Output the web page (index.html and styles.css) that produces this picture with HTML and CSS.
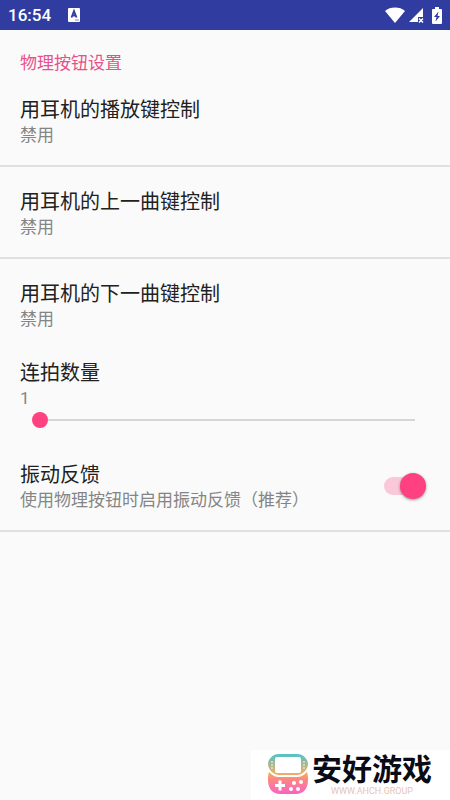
FILE: index.html
```html
<!DOCTYPE html>
<html lang="zh-CN">
<head>
<meta charset="utf-8">
<meta name="viewport" content="width=device-width, initial-scale=1">
<title>物理按钮设置</title>
<link rel="stylesheet" href="styles.css">
</head>
<body>
<header class="status">
  <span class="clock">16:54</span>
  <svg class="app-icon" width="12" height="14" viewBox="0 0 12 14" aria-hidden="true">
    <path fill="#fff" d="M1 0h10a1 1 0 0 1 1 1v12a1 1 0 0 1-1 1H1a1 1 0 0 1-1-1V1a1 1 0 0 1 1-1z"/>
    <path fill="none" stroke="#303c9f" stroke-width="1.8" d="M3.500 9.500 6 3l2.500 6.500M4.500 7.500h3"/>
    <path stroke="#303c9f" stroke-width=".6" d="M7 12h4"/>
  </svg>
  <span class="system">
    <svg width="20" height="16" viewBox="0 0 20 16" aria-hidden="true">
      <path fill="#fff" d="M0 4C5-.6 15-.6 20 4l-10 12z"/>
    </svg>
    <svg width="15" height="15" viewBox="0 0 15 15" aria-hidden="true">
      <path fill="#fff" d="M14 0v9H9v5H0z"/>
      <path fill="none" stroke="#fff" stroke-width="1.500" d="m10 10.500 4 4m0-4-4 4"/>
    </svg>
    <svg width="10" height="17" viewBox="0 0 10 17" aria-hidden="true">
      <path fill="#fff" d="M3 0h4v2h2a1 1 0 0 1 1 1v13a1 1 0 0 1-1 1H1a1 1 0 0 1-1-1V3a1 1 0 0 1 1-1h2z"/>
      <path fill="#303c9f" d="M6.500 4.500 2 10h2.500L3.500 14.500 8 9H5.500z"/>
    </svg>
  </span>
</header>
<main class="settings">
  <h1 class="category">物理按钮设置</h1>
  <button class="row divided" type="button">
    <span class="title">用耳机的播放键控制</span>
    <span class="summary">禁用</span>
  </button>
  <button class="row divided" type="button">
    <span class="title">用耳机的上一曲键控制</span>
    <span class="summary">禁用</span>
  </button>
  <button class="row" type="button">
    <span class="title">用耳机的下一曲键控制</span>
    <span class="summary">禁用</span>
  </button>
  <div class="row">
    <label class="title" for="burst">连拍数量</label>
    <output class="summary" for="burst">1</output>
    <input class="slider" id="burst" type="range" min="1" max="20" value="1">
  </div>
  <div class="row divided with-switch">
    <label class="texts" for="vibrate">
      <span class="title">振动反馈</span>
      <span class="summary">使用物理按钮时启用振动反馈（推荐）</span>
    </label>
    <input class="switch" id="vibrate" type="checkbox" checked>
  </div>
</main>
<footer class="brand">
  <svg class="logo" width="40" height="40" viewBox="0 0 40 40" aria-hidden="true">
    <defs>
      <linearGradient id="shell" x1="0" y1="0" x2="0" y2="40" gradientUnits="userSpaceOnUse">
        <stop offset="0" stop-color="#4fc3c9"/>
        <stop offset=".48" stop-color="#f0b060"/>
        <stop offset=".62" stop-color="#fb8a80"/>
        <stop offset="1" stop-color="#fb62c4"/>
      </linearGradient>
    </defs>
    <path fill="url(#shell)" fill-rule="evenodd" d="M11 0h18c6 0 11 5 11 10s-5 11-11 11H11C5 21 0 15 0 10S5 0 11 0zM9 3a2 2 0 0 0-2 2v12a2 2 0 0 0 2 2h22a2 2 0 0 0 2-2V5a2 2 0 0 0-2-2z"/>
    <path fill="url(#shell)" d="M1 18c3 3 6 5 10 5h18c4 0 7-2 10-5 1 2 1 5 1 8 0 9-5 14-12 14H12C5 40 0 35 0 26c0-3 0-6 1-8z"/>
    <path stroke="#fff" stroke-width="3" d="M7 31.500h10M12 26.500v10"/>
    <g fill="#fff">
      <circle cx="26" cy="29" r="2"/><circle cx="33" cy="28" r="2"/>
      <circle cx="23" cy="35" r="2"/><circle cx="30" cy="35" r="2"/>
      <circle cx="4" cy="8" r=".8"/><circle cx="4" cy="11" r=".8"/><circle cx="4" cy="14" r=".8"/>
      <circle cx="36" cy="8" r=".8"/><circle cx="36" cy="11" r=".8"/><circle cx="36" cy="14" r=".8"/>
    </g>
  </svg>
  <div class="brand-text">
    <strong class="brand-name">安好游戏</strong>
    <small class="brand-url">WWW.AHCH.GROUP</small>
  </div>
</footer>
</body>
</html>
```
FILE: styles.css
```css
* {
  box-sizing: border-box;
}

body {
  display: flex;
  flex-direction: column;
  min-height: 100vh;
  margin: 0;
  background: #fafafa;
  color: #212121;
  font-family: Roboto, "Noto Sans CJK SC", sans-serif;
}

.status {
  display: flex;
  align-items: center;
  gap: 17px;
  height: 30px;
  padding: 0 8px;
  background: #303c9f;
  color: #fff;
}

.clock {
  font-size: 17px;
  font-weight: 500;
  line-height: 30px;
}

.system {
  display: flex;
  align-items: center;
  gap: 4px;
  margin-left: auto;
}

.system svg:last-child {
  margin-left: 4px;
}

.category {
  margin: 0;
  padding: 21px 20px 0;
  color: #e8508a;
  font-size: 17px;
  font-weight: 400;
  line-height: 24px;
}

.row {
  display: flex;
  flex-direction: column;
  width: 100%;
  padding: 21px 20px 8px;
  border: 0;
  background: none;
  color: inherit;
  font: inherit;
  text-align: left;
}

.divided {
  padding-bottom: 19px;
  border-bottom: 2px solid #e0e0e0;
}

.title {
  display: block;
  font-size: 20px;
  line-height: 28px;
}

.summary {
  display: block;
  color: #858585;
  font-size: 17px;
  line-height: 22px;
}

.slider {
  appearance: none;
  height: 22px;
  margin: 0 15px 1px 12px;
  background: linear-gradient(#d6d6d6, #d6d6d6) center / 100% 2px no-repeat content-box;
  padding-left: 8px;
}

.slider::-webkit-slider-runnable-track {
  height: 16px;
  margin-left: -8px;
}

.slider::-webkit-slider-thumb {
  appearance: none;
  width: 16px;
  height: 16px;
  border-radius: 50%;
  background: #ff4081;
}

.with-switch {
  flex-direction: row;
  align-items: center;
  justify-content: space-between;
}

.switch {
  appearance: none;
  display: flex;
  align-items: center;
  justify-content: flex-end;
  width: 38px;
  height: 18px;
  margin: 0 8px 0 0;
  border-radius: 9px;
  background: #fbc8da;
}

.switch::before {
  content: "";
  flex: none;
  width: 26px;
  height: 26px;
  margin-right: -4px;
  border-radius: 50%;
  background: #ff4081;
  box-shadow: 0 1px 3px rgba(0, 0, 0, 0.4);
}

.brand {
  display: flex;
  align-items: flex-start;
  gap: 4px;
  margin: auto 0 0 auto;
  padding: 4px 18px 4px 17px;
  background: #fff;
}

.brand-text {
  display: flex;
  flex-direction: column;
  align-items: center;
}

.brand-name {
  color: #0b0b16;
  font-size: 30px;
  font-weight: 700;
  line-height: 32px;
}

.brand-url {
  color: #e8c4b8;
  font-size: 9px;
  line-height: 10px;
}
```
